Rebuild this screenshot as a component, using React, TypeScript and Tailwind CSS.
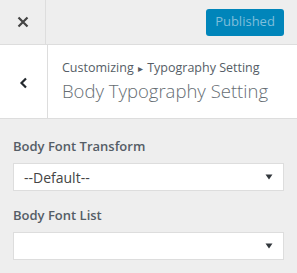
import React from 'react';

const font = { fontFamily: '"Open Sans", "Noto Sans", sans-serif' };

const Caret = () => (
  <svg width="8" height="6" viewBox="0 0 8 6" className="text-[#32373c]">
    <path d="M0.5 0.5 L7.5 0.5 L4 5.5 Z" fill="currentColor" />
  </svg>
);

const SelectBox = ({ value }: { value: string }) => (
  <div className="flex h-[28px] items-center justify-between border border-[#ddd] bg-white pl-[10px] pr-[10px] text-[14px] text-[#444]">
    <span>{value}</span>
    <Caret />
  </div>
);

export default function App() {
  return (
    <div className="h-[273px] w-[297px] overflow-hidden bg-[#eeeeee]" style={font}>
      {/* header */}
      <div className="flex h-[45px] items-center border-b border-[#ddd]">
        <div className="flex h-full w-[46px] items-center justify-center border-r border-[#ddd]">
          <svg width="12" height="12" viewBox="0 0 12 12">
            <path d="M1.5 1.5 L10.5 10.5 M10.5 1.5 L1.5 10.5" stroke="#444" strokeWidth="2.2" />
          </svg>
        </div>
        <div className="flex flex-1 justify-end pr-[13px]">
          <button className="h-[27px] w-[78px] rounded-[3px] bg-[#0085ba] text-[13px] text-[#7fbedb]">
            Published
          </button>
        </div>
      </div>

      {/* section title */}
      <div className="flex h-[74px] border-b border-[#ddd] bg-white">
        <div className="flex w-[48px] items-center justify-center border-r border-[#ddd] pt-[2px]">
          <svg width="9" height="12" viewBox="0 0 9 12">
            <path d="M7 1.5 L2.5 6 L7 10.5" stroke="#23282d" strokeWidth="2.2" fill="none" />
          </svg>
        </div>
        <div className="flex flex-col justify-center pl-[14px] text-[#555d66]">
          <div className="text-[12.5px] leading-[18px]">
            Customizing <span className="mx-[1px] text-[10px]">▸</span> Typography Setting
          </div>
          <div className="text-[18.5px] font-light leading-[28px] text-[#666d73]">Body Typography Setting</div>
        </div>
      </div>

      {/* controls */}
      <div className="px-[13px] pt-[17px]">
        <div className="mb-[7px] text-[13px] font-semibold leading-[20px] text-[#555d66]">Body Font Transform</div>
        <SelectBox value="--Default--" />
        <div className="mb-[7px] mt-[14px] text-[13px] font-semibold leading-[20px] text-[#555d66]">Body Font List</div>
        <SelectBox value="" />
      </div>
    </div>
  );
}
